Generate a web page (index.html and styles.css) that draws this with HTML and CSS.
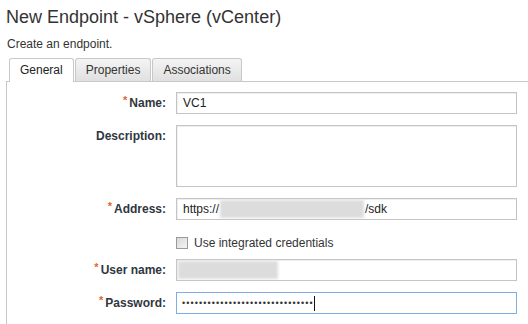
FILE: index.html
```html
<!DOCTYPE html>
<html lang="en">
<head>
    <meta charset="UTF-8">
    <title>New Endpoint - vSphere (vCenter)</title>
    <link rel="stylesheet" href="styles.css">
</head>
<body>
    <div class="page">
        <h1>New Endpoint - vSphere (vCenter)</h1>
        <p class="intro">Create an endpoint.</p>

        <div class="tabs">
            <div class="tab active">General</div>
            <div class="tab">Properties</div>
            <div class="tab">Associations</div>
        </div>

        <div class="panel">
            <div class="form">
                <label class="label"><span class="req">*</span>Name:</label>
                <div class="field">VC1</div>

                <label class="label">Description:</label>
                <div class="field area"></div>

                <label class="label"><span class="req">*</span>Address:</label>
                <div class="field">https://<span class="blur addr"></span>/sdk</div>

                <div></div>
                <div class="check-row">
                    <span class="checkbox"></span>
                    <span>Use integrated credentials</span>
                </div>

                <label class="label"><span class="req">*</span>User name:</label>
                <div class="field"><span class="blur user"></span></div>

                <label class="label"><span class="req">*</span>Password:</label>
                <div class="field focus"><span class="dots">•••••••••••••••••••••••••••••••</span><span class="caret"></span></div>
            </div>
        </div>
    </div>
</body>
</html>
```

FILE: styles.css
```css
body {
    margin: 0;
    background: #fff;
    font-family: "Liberation Sans", Arial, sans-serif;
    color: #333;
    font-size: 12px;
}
.page {
    padding: 6px 0 0 6px;
}
h1 {
    margin: 0;
    font-size: 18px;
    font-weight: normal;
    line-height: 22px;
    color: #333;
}
.intro {
    margin: 9px 0 0 1px;
    line-height: 15px;
}
.tabs {
    display: flex;
    gap: 1px;
    margin: 6px 0 -1px 3px;
    position: relative;
}
.tab {
    height: 22px;
    line-height: 22px;
    padding: 0 10px;
    border: 1px solid #c8c8c8;
    border-bottom: none;
    border-radius: 3px 3px 0 0;
    background: linear-gradient(#f4f4f4, #e0e0e0);
    color: #333;
}
.tab.active {
    background: #fff;
    color: #222;
    height: 23px;
}
.panel {
    border-top: 1px solid #c8c8c8;
    border-left: 1px solid #c8c8c8;
    height: 240px;
    padding-top: 10px;
}
.form {
    display: grid;
    grid-template-columns: 159px 341px;
    grid-auto-rows: min-content;
    column-gap: 10px;
    row-gap: 11px;
}
.label {
    text-align: right;
    font-weight: bold;
    height: 22px;
    line-height: 22px;
    color: #2f3640;
}
.req {
    color: #e0682a;
    font-size: 11px;
    line-height: 10px;
    vertical-align: 3px;
    margin-right: 2px;
}
.field {
    height: 20px;
    line-height: 20px;
    border: 1px solid #c4c4c4;
    box-shadow: inset 1px 1px 1px #eee;
    padding: 0 6px;
    color: #222;
    display: flex;
    align-items: center;
    white-space: nowrap;
}
.field.area {
    height: 60px;
}
.field.focus {
    border-color: #7eaee2;
    box-shadow: none;
    padding-left: 5px;
}
.blur {
    display: inline-block;
    height: 18px;
    background: #dcdcdc;
    filter: blur(1.5px);
}
.blur.addr {
    width: 144px;
    margin: 0 1px;
}
.blur.user {
    width: 100px;
    margin-left: -5px;
}
.dots {
    font-size: 9px;
    letter-spacing: 1.1px;
    color: #333;
}
.caret {
    display: inline-block;
    width: 1px;
    height: 15px;
    background: #111;
}
.check-row {
    display: flex;
    align-items: flex-start;
    gap: 6px;
    height: 11px;
    padding-top: 6px;
    line-height: 12px;
}
.checkbox {
    flex: none;
    width: 10px;
    height: 10px;
    border: 1px solid #9a9a9a;
    background: linear-gradient(135deg, #d8d8d8, #f4f4f4);
}
```
